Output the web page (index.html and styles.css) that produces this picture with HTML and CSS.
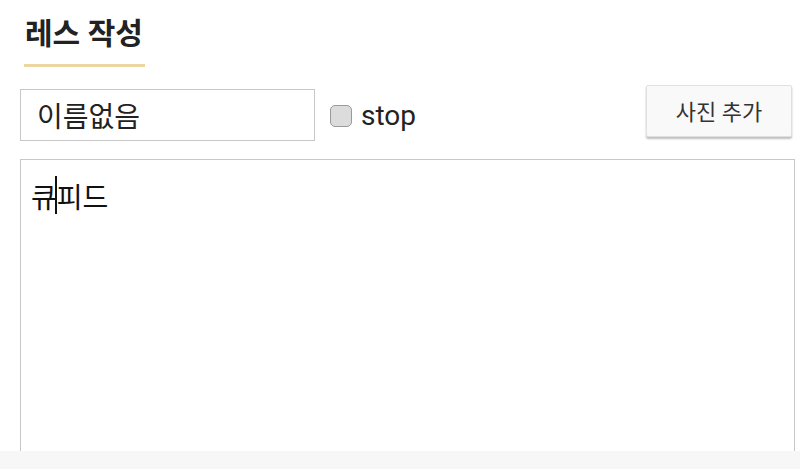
FILE: index.html
```html
<!DOCTYPE html>
<html lang="ko">
<head>
    <meta charset="UTF-8">
    <meta name="viewport" content="width=device-width, initial-scale=1.0">
    <title>레스 작성</title>
    <link rel="stylesheet" href="styles.css">
</head>
<body>
    <div class="page">
        <div class="header">
            <h1 class="title">레스 작성</h1>
        </div>

        <div class="form-row">
            <input class="name-input" type="text" value="이름없음">
            <label class="stop-label">
                <span class="stop-check"></span>
                stop
            </label>
            <button class="photo-btn" type="button">사진 추가</button>
        </div>

        <div class="body-box">
            <div class="body-text">큐<span class="caret"></span>피드</div>
        </div>
    </div>
    <div class="bottom-bar"></div>
</body>
</html>
```

FILE: styles.css
```css
body {
    margin: 0;
    font-family: Roboto, "Noto Sans CJK KR", sans-serif;
    background-color: #fff;
    height: 469px;
    overflow: hidden;
    position: relative;
}
.page {
    padding: 0 5px 0 20px;
}
.header {
    padding: 0 0 0 4px;
    height: 89px;
}
.title {
    display: inline-block;
    margin: 0;
    padding: 14px 2px 10px 1px;
    font-size: 30px;
    font-weight: bold;
    line-height: 40px;
    color: #222;
    border-bottom: 3px solid #ecd7a2;
}
.form-row {
    display: flex;
    align-items: center;
    height: 52px;
}
.name-input {
    box-sizing: border-box;
    width: 295px;
    height: 52px;
    margin: 0;
    padding: 0 0 0 16px;
    border: 1px solid #c8c8c8;
    font-family: inherit;
    font-size: 28px;
    color: #222;
    outline: none;
}
.stop-label {
    display: flex;
    align-items: center;
    margin-left: 15px;
    font-size: 28px;
    color: #222;
}
.stop-check {
    box-sizing: border-box;
    width: 22px;
    height: 22px;
    margin: 2px 9px 0 0;
    border: 1.5px solid #9a9a9a;
    border-radius: 5px;
    background-color: #dcdcdc;
}
.photo-btn {
    box-sizing: border-box;
    width: 146px;
    height: 52px;
    margin: -8px 3px 0 auto;
    padding-bottom: 3px;
    border: 1px solid #e0e0e0;
    border-radius: 2px;
    background-color: #f9f9f9;
    box-shadow: 0 2px 2px rgba(0, 0, 0, 0.25);
    font-family: inherit;
    font-size: 22px;
    color: #333;
}
.body-box {
    box-sizing: border-box;
    height: 320px;
    margin-top: 18px;
    padding: 16px 10px;
    border: 1px solid #c8c8c8;
}
.body-text {
    font-size: 28px;
    line-height: 40px;
    color: #111;
}
.caret {
    display: inline-block;
    width: 2px;
    height: 38px;
    margin-left: -2px;
    vertical-align: -6px;
    background-color: #111;
}
.bottom-bar {
    position: absolute;
    left: 0;
    right: 0;
    bottom: 0;
    height: 18px;
    background-color: #f7f7f7;
}
```
